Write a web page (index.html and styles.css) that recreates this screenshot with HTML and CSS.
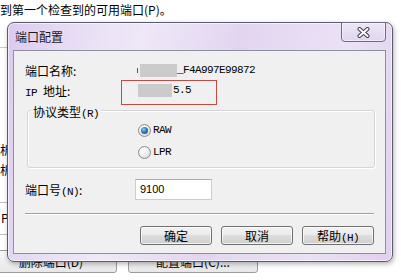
FILE: index.html
```html
<!DOCTYPE html>
<html lang="zh-CN">
<head>
  <meta charset="UTF-8" />
  <title>端口配置</title>
  <link rel="stylesheet" href="styles.css">
</head>
<body>

  <!-- page behind the dialog -->
  <div class="desk">
    <p class="hint">到第一个检查到的可用端口(P)。</p>
    <div class="bg-rule"></div>
    <div class="bg-list">
      <div>析</div>
      <div>析</div>
    </div>
    <div class="bg-box">P</div>
    <div class="bg-buttons">
      <div class="bg-btn wide">删除端口(D)</div>
      <div class="bg-btn">配置端口(C)...</div>
    </div>
  </div>

  <!-- dialog window -->
  <div class="dialog">
    <div class="titlebar">
      <div class="title">端口配置</div>
      <div class="close">
        <svg width="13" height="11" viewBox="0 0 13 11">
          <line x1="2.5" y1="2" x2="10.5" y2="9" stroke="#3e3e4e" stroke-width="4" stroke-linecap="round" />
          <line x1="10.5" y1="2" x2="2.5" y2="9" stroke="#3e3e4e" stroke-width="4" stroke-linecap="round" />
          <line x1="2.5" y1="2" x2="10.5" y2="9" stroke="#fff" stroke-width="2" stroke-linecap="round" />
          <line x1="10.5" y1="2" x2="2.5" y2="9" stroke="#fff" stroke-width="2" stroke-linecap="round" />
        </svg>
      </div>
    </div>

    <div class="client">
      <div class="row">
        <div class="label">端口名称:</div>
        <span class="tick"></span><span class="blur"></span><span class="en">_F4A997E99872</span>
      </div>

      <div class="row">
        <div class="label"><span class="en">IP&nbsp;</span>地址:</div>
        <span class="blur blur-ip"></span><span class="en">5.5</span>
        <div class="mark"></div>
      </div>

      <div class="group">
        <div class="legend">协议类型<span class="en">(R)</span></div>
        <div class="radio-row">
          <span class="radio on"></span><span class="en">RAW</span>
        </div>
        <div class="radio-row">
          <span class="radio"></span><span class="en">LPR</span>
        </div>
      </div>

      <div class="row port-row">
        <div class="label short">端口号<span class="en">(N)</span>:</div>
        <div class="input">9100</div>
      </div>

      <div class="sep"></div>

      <div class="buttons">
        <button class="btn">确定</button>
        <button class="btn">取消</button>
        <button class="btn">帮助<span class="en">(H)</span></button>
      </div>
    </div>
  </div>

</body>
</html>
```

FILE: styles.css
```css
body {
  margin: 0;
  width: 401px;
  height: 280px;
  overflow: hidden;
  position: relative;
  background: #fff;
  color: #000;
  font-family: "Noto Sans CJK SC", sans-serif;
  font-size: 12px;
}

.en {
  font-family: "Liberation Mono", monospace;
  font-size: 11px;
  letter-spacing: -0.6px;
}

/* background page */
.desk {
  display: flex;
  flex-direction: column;
  align-items: flex-start;
  height: 280px;
}

.hint {
  margin: 2px 0 0 0;
  line-height: 16px;
}

.bg-rule {
  margin-top: 29px;
  width: 40px;
  border-top: 1px solid #c9c9c9;
}

.bg-list {
  margin: 92px 0 0 0;
  line-height: 20px;
}

.bg-box {
  margin-top: 22px;
  width: 60px;
  height: 33px;
  box-sizing: border-box;
  border-top: 1px solid #bdbdbd;
  border-bottom: 1px solid #bdbdbd;
  line-height: 30px;
  padding-left: 1px;
}

.bg-buttons {
  display: flex;
  gap: 11px;
  margin: 15px 0 0 -15px;
}

.bg-btn {
  width: 130px;
  height: 23px;
  box-sizing: border-box;
  border: 1px solid #9c9c9c;
  border-radius: 3px;
  background: linear-gradient(#f7f7f7, #e8e8e8);
  text-align: center;
  line-height: 21px;
}

.bg-btn.wide {
  width: 132px;
}

/* dialog */
.dialog {
  position: absolute;
  left: 7px;
  top: 22px;
  width: 386px;
  height: 240px;
  box-sizing: border-box;
  display: flex;
  flex-direction: column;
  border: 1px solid #5b5b6b;
  border-radius: 7px;
  background: linear-gradient(100deg, #dccaef 0%, #e9dff5 18%, #efe8f8 32%, #e3d5f1 55%, #ebe1f6 80%, #e0d0f0 100%);
  box-shadow: 1px 2px 5px rgba(0,0,0,0.3), inset 0 0 0 1px rgba(255,255,255,0.6);
}

.titlebar {
  height: 27px;
  flex-shrink: 0;
  display: flex;
  justify-content: space-between;
  align-items: flex-start;
}

.title {
  padding: 7px 0 0 7px;
  line-height: 14px;
  color: #1a1a1a;
}

.close {
  width: 45px;
  height: 20px;
  box-sizing: border-box;
  margin: -1px 6px 0 0;
  border: 1px solid #6c6c80;
  border-radius: 0 0 4px 4px;
  background: linear-gradient(#ede6f6, #e1d5ef);
  box-shadow: inset 0 0 0 1px rgba(255,255,255,0.5);
  display: flex;
  justify-content: center;
  align-items: center;
}

.client {
  flex: 1;
  margin: 0 6px 7px 5px;
  padding: 9px 10px 0 11px;
  background: #f0f0f0;
  border: 1px solid #8f8fa0;
}

.row {
  position: relative;
  display: flex;
  align-items: center;
  height: 20px;
}

.label {
  width: 112px;
  flex-shrink: 0;
}

.label.short {
  width: 110px;
}

.tick {
  width: 1px;
  height: 5px;
  margin-right: 2px;
  background: #555;
}

.blur {
  width: 37px;
  height: 13px;
  background: #cbcbcb;
}

.blur-ip {
  width: 34px;
  margin-left: 1px;
  margin-right: 1px;
}

.mark {
  position: absolute;
  left: 96px;
  top: 0;
  width: 96px;
  height: 25px;
  box-sizing: border-box;
  border: 1px solid #c34a45;
}

.group {
  position: relative;
  margin: 10px 0 0 2px;
  padding: 8px 0 4px 110px;
  border: 1px solid #d5d5d5;
  border-radius: 3px;
  box-shadow: inset 1px 1px 0 #fff, 1px 1px 0 #fff;
}

.legend {
  position: absolute;
  left: 3px;
  top: -6px;
  padding: 0 2px;
  line-height: 14px;
  background: #f0f0f0;
}

.radio-row {
  display: flex;
  align-items: center;
  gap: 2px;
  height: 22px;
}

.radio {
  position: relative;
  width: 13px;
  height: 13px;
  box-sizing: border-box;
  border-radius: 50%;
  border: 1px solid #8d8d8d;
  background: radial-gradient(circle at 40% 35%, #fff 0%, #f0f0f0 40%, #cfcfcf 100%);
}

.radio.on::after {
  content: "";
  position: absolute;
  left: 2px;
  top: 2px;
  width: 7px;
  height: 7px;
  border-radius: 50%;
  background: radial-gradient(circle at 40% 35%, #8fd0f5 0%, #2e7bb8 45%, #174a74 100%);
}

.port-row {
  height: 21px;
  margin-top: 11px;
}

.input {
  width: 77px;
  height: 21px;
  box-sizing: border-box;
  padding-left: 4px;
  border: 1px solid #c8cdd3;
  border-top-color: #abadb3;
  background: #fff;
  font-family: "Liberation Sans", sans-serif;
  font-size: 11px;
  line-height: 19px;
}

.sep {
  margin: 13px 1px 0 0;
  border-top: 1px solid #a0a0a0;
  border-bottom: 1px solid #fff;
}

.buttons {
  display: flex;
  justify-content: flex-end;
  gap: 9px;
  margin: 11px 1px 0 0;
}

.btn {
  width: 72px;
  height: 19px;
  box-sizing: border-box;
  padding: 0;
  border: 1px solid #707070;
  border-radius: 3px;
  background: linear-gradient(#f2f2f2 0%, #ebebeb 45%, #dddddd 50%, #cfcfcf 100%);
  box-shadow: inset 0 0 0 1px rgba(255,255,255,0.7);
  font-family: "Noto Sans CJK SC", sans-serif;
  font-size: 12px;
  line-height: 17px;
  color: #000;
}
```
